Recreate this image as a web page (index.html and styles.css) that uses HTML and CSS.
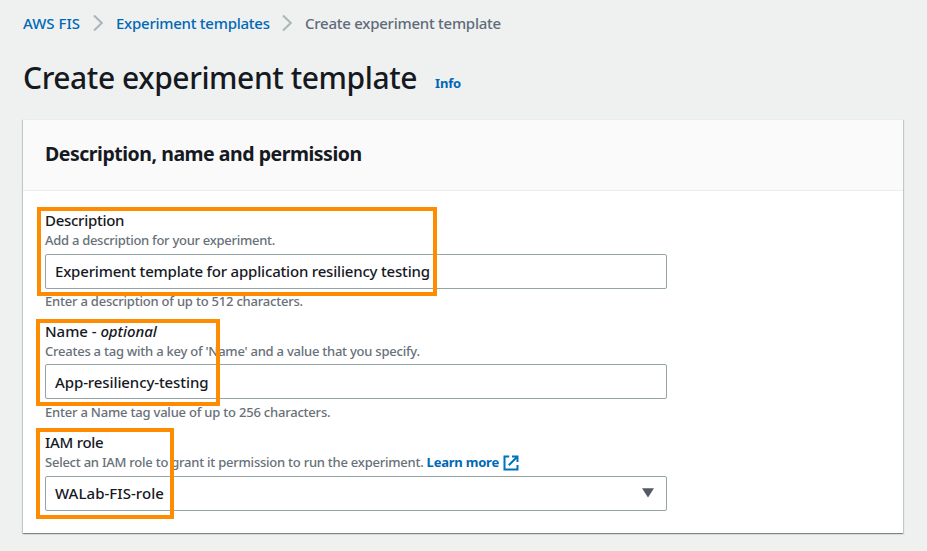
FILE: index.html
```html
<!DOCTYPE html>
<html lang="en">
<head>
<meta charset="utf-8">
<title>Create experiment template</title>
<link rel="stylesheet" href="styles.css">
</head>
<body>
<nav class="breadcrumbs">
  <a class="crumb crumb-root">AWS FIS</a>
  <svg class="chevron" viewBox="0 0 10 18"><path d="M1 1.5 8.7 9 1 16.5"/></svg>
  <a class="crumb crumb-list">Experiment templates</a>
  <svg class="chevron" viewBox="0 0 10 18"><path d="M1 1.5 8.7 9 1 16.5"/></svg>
  <span class="crumb crumb-current">Create experiment template</span>
</nav>
<header class="page-header">
  <h1 class="page-title">Create experiment template</h1>
  <a class="info">Info</a>
</header>
<section class="card">
  <div class="card-header"><h2 class="card-title">Description, name and permission</h2></div>
  <div class="card-body">
    <div class="field field-description">
      <div class="label">Description</div>
      <div class="hint">Add a description for your experiment.</div>
      <div class="control"><span class="value">Experiment template for application resiliency testing</span></div>
      <div class="constraint">Enter a description of up to 512 characters.</div>
      <div class="highlight"></div>
    </div>
    <div class="field field-name">
      <div class="label">Name - <em>optional</em></div>
      <div class="hint">Creates a tag with a key of 'Name' and a value that you specify.</div>
      <div class="control"><span class="value">App-resiliency-testing</span></div>
      <div class="constraint">Enter a Name tag value of up to 256 characters.</div>
      <div class="highlight"></div>
    </div>
    <div class="field field-role">
      <div class="label">IAM role</div>
      <div class="hint">Select an IAM role to grant it permission to run the experiment. <a class="learn-more">Learn more</a><svg class="external" viewBox="0 0 16 16"><path d="M6.2 1.5H1.5v13h13V10M9 1.5h5.5V7M14.2 1.8 5.8 10.2"/></svg></div>
      <div class="control select"><span class="value">WALab-FIS-role</span><svg class="caret" viewBox="0 0 12 10"><path d="M0 .3h12L6 9.6z"/></svg></div>
      <div class="highlight"></div>
    </div>
  </div>
</section>
</body>
</html>
```

FILE: styles.css
```css
* { box-sizing: border-box; }
body {
  margin: 0;
  padding: 11px 24px 0 23px;
  height: 551px;
  overflow: hidden;
  background: #eff1f1;
  color: #16191f;
  font-family: "Noto Sans", sans-serif;
  font-size: 15px;
  font-weight: 500;
}
.breadcrumbs { display: flex; align-items: center; height: 24px; color: #5f6b7a; letter-spacing: -.255px; }
.crumb { line-height: 24px; white-space: nowrap; }
.crumb-root, .crumb-list, .info, .learn-more { color: #0068b5; }
.crumb-root { width: 70px; letter-spacing: 0; }
.crumb-list { width: 166px; margin-left: 13px; }
.crumb-current { margin-left: 13px; }
.chevron { width: 10px; height: 18px; flex: none; fill: none; stroke: #aab7b8; stroke-width: 2; }
.page-header { display: flex; align-items: baseline; height: 84px; padding-top: 23px; }
.page-title { margin: 0; width: 412px; font-size: 30px; line-height: 40px; font-weight: 500; letter-spacing: -.42px; white-space: nowrap; }
.info { position: relative; top: -1px; font-size: 13px; font-weight: 700; letter-spacing: -.17px; }
.card {
  width: 880px;
  height: 414px;
  background: #fff;
  border-top: 1px solid #eaeded;
  box-shadow: 0 1px 1px rgba(0, 28, 36, .3), 1px 1px 1px rgba(0, 28, 36, .15), -1px 1px 1px rgba(0, 28, 36, .15);
}
.card-header { height: 71px; padding: 19px 22px; background: #fafafa; border-bottom: 1px solid #eaeded; }
.card-title { margin: 0; font-size: 19.5px; line-height: 29px; font-weight: 700; letter-spacing: -.48px; white-space: nowrap; }
.card-body { padding: 20px 22px 0; }
.field { position: relative; width: 622px; height: 111px; white-space: nowrap; }
.label { height: 20px; line-height: 18px; letter-spacing: -.28px; }
.field-name .label { letter-spacing: -.04px; }
.hint { height: 23px; line-height: 19px; font-size: 13px; color: #687078; letter-spacing: -.24px; }
.field-description .hint { letter-spacing: -.28px; }
.control { display: flex; align-items: center; height: 35px; padding: 0 12px 0 9px; border: 1px solid #95a5a6; border-radius: 2px; line-height: 20px; }
.field-description .control, .field-role .control { padding-bottom: 2px; }
.field-description .value { letter-spacing: -.19px; }
.field-name .value { letter-spacing: -.1px; }
.field-role .value { letter-spacing: .05px; }
.constraint { margin-top: 3px; line-height: 19px; font-size: 13px; color: #687078; letter-spacing: -.21px; }
.select { justify-content: space-between; }
.caret { width: 12px; height: 10px; fill: #545b64; }
.learn-more { font-weight: 700; letter-spacing: -.22px; }
.external { width: 16px; height: 16px; margin-left: 4px; vertical-align: -4px; fill: none; stroke: #0073bb; stroke-width: 2; }
.highlight { position: absolute; border: 4px solid #ff8c00; }
.field-description .highlight { left: -8px; top: -4px; width: 400px; height: 89px; }
.field-name .highlight { left: -9px; top: -3px; width: 184px; height: 87px; }
.field-role .highlight { left: -9px; top: -5px; width: 138px; height: 91px; }
.field-name .hint { height: 22px; }
.field-name .constraint { margin-top: 4px; }
```
